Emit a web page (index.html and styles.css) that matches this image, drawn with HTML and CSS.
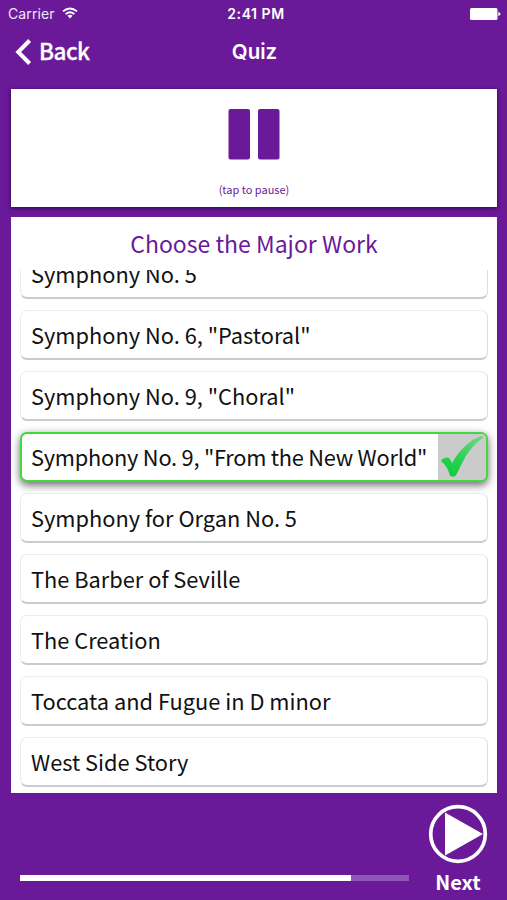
FILE: index.html
```html
<!DOCTYPE html>
<html lang="en">
<head>
<meta charset="utf-8">
<title>Quiz</title>
<link rel="stylesheet" href="styles.css">
</head>
<body>
<div class="app">
  <div class="status">
    <div class="carrier"><span>Carrier</span>
      <svg class="wifi" width="16" height="12" viewBox="0 0 16 12" fill="none" stroke="#fff" stroke-width="1.9"><path d="M1 4.4Q8-1.6 15 4.4M3.6 7.1Q8 3.3 12.4 7.1"/><path d="M5.5 8.8Q8 6.8 10.5 8.8L8 11.5Z" fill="#fff" stroke="none"/></svg>
    </div>
    <div class="time">2:41 PM</div>
    <svg class="battery" width="31" height="12" viewBox="0 0 31 12" fill="#fff"><rect width="27.5" height="12" rx="1.5"/><path d="M28.3 4Q30.5 4.4 30.5 6T28.3 8Z"/></svg>
  </div>
  <header class="nav">
    <div class="back">
      <svg width="17" height="26" viewBox="0 0 17 26" fill="none" stroke="#fff" stroke-width="4"><path d="M14.6 1.5L3.2 13L14.6 24.5"/></svg>
      <span class="label">Back</span>
    </div>
    <h1 class="title">Quiz</h1>
    <div></div>
  </header>
  <section class="player">
    <svg width="52" height="51" viewBox="0 0 52 51" fill="#6a1a98"><rect x="0.5" width="21.5" height="50.5" rx="2"/><rect x="30" width="21.5" height="50.5" rx="2"/></svg>
    <p class="hint">(tap to pause)</p>
  </section>
  <section class="question">
    <h2 class="prompt">Choose the Major Work</h2>
    <div class="viewport">
      <ul class="list">
        <li class="row">Symphony No. 5</li>
        <li class="row">Symphony No. 6, "Pastoral"</li>
        <li class="row">Symphony No. 9, "Choral"</li>
        <li class="row correct"><span>Symphony No. 9, "From the New World"</span>
          <span class="mark"><svg width="47" height="47" viewBox="0 0 47 47"><defs><linearGradient id="g" x1="0" y1="1" x2=".55" y2="0"><stop offset="0" stop-color="#0ccb3c"/><stop offset=".55" stop-color="#2bd253"/><stop offset="1" stop-color="#65d37c"/></linearGradient></defs><path fill="url(#g)" d="M3.2 26.2Q6.5 22.8 10 23.8Q12.2 24.2 14 29.3Q19 19.6 27.5 11.8Q35 4.3 44.8 2.1Q45.5 2.8 44.5 4Q34 11.9 27.5 22.6Q21.5 34.5 18 41.5Q13.7 44 11.8 41.2Q10.1 34 5.2 28.9Q3.8 28.8 3.2 26.2Z"/></svg></span>
        </li>
        <li class="row">Symphony for Organ No. 5</li>
        <li class="row">The Barber of Seville</li>
        <li class="row">The Creation</li>
        <li class="row">Toccata and Fugue in D minor</li>
        <li class="row">West Side Story</li>
      </ul>
    </div>
  </section>
  <footer class="footer">
    <div class="track"><div class="fill"></div></div>
    <div class="next">
      <svg width="60" height="60" viewBox="0 0 60 60"><circle cx="30" cy="30" r="27.3" fill="none" stroke="#fff" stroke-width="3.7"/><path d="M17 8.5V51.5L55 30Z" fill="#fff"/></svg>
      <span>Next</span>
    </div>
  </footer>
</div>
</body>
</html>
```

FILE: styles.css
```css
* { box-sizing: border-box; margin: 0; padding: 0; }
body {
  background: #6a1a98;
  font-family: "Noto Sans CJK SC", "Noto Sans", sans-serif;
  color: #111;
}
.app {
  width: 507px;
  height: 900px;
  display: flex;
  flex-direction: column;
  overflow: hidden;
  white-space: nowrap;
}
.status {
  height: 28px;
  display: grid;
  grid-template-columns: 1fr auto 1fr;
  align-items: center;
  padding: 0 6px 0 8px;
  color: #fff;
  font: 14px/28px Inter, sans-serif;
}
.carrier { display: flex; align-items: center; gap: 7px; color: #f2e6f8; letter-spacing: 0.1px; }
.wifi { margin-top: -2px; }
.time { font-weight: 600; font-size: 14px; letter-spacing: 0.55px; margin-left: 3px; }
.battery { justify-self: end; }
.nav {
  height: 61px;
  display: grid;
  grid-template-columns: 1fr auto 1fr;
  padding: 0 15px;
  color: #fff;
}
.back {
  display: flex;
  align-items: center;
  gap: 7px;
  height: 48px;
}
.label { font-size: 22.5px; line-height: 44px; font-weight: 500; height: 48px; letter-spacing: -0.5px; -webkit-text-stroke: 0.3px #fff; }
.title { height: 48px; font: 600 20.5px/48px Inter, sans-serif; padding-left: 2px; }
.player {
  height: 118px;
  margin: 0 10px 0 11px;
  padding-top: 20px;
  background: #fff;
  box-shadow: 0 1px 4px rgba(20, 0, 40, 0.8);
  display: flex;
  flex-direction: column;
  align-items: center;
}
.hint { margin-top: 20px; color: #6a1a98; font-size: 11px; line-height: 18px; }
.question {
  height: 576px;
  margin: 10px 10px 0 11px;
  background: #fff;
}
.prompt {
  height: 53px;
  color: #6a1a98;
  font-size: 23px;
  font-weight: 400;
  line-height: 53px;
  text-align: center;
}
.viewport { height: 523px; overflow: hidden; padding: 0 9px; }
.list {
  list-style: none;
  display: flex;
  flex-direction: column;
  gap: 11px;
  margin-top: -21px;
}
.row {
  height: 50px;
  flex: none;
  display: flex;
  justify-content: space-between;
  padding-left: 10px;
  border: 1px solid #ececec;
  border-right-color: #ddd;
  border-bottom: 2px solid #cbcbcb;
  border-radius: 7px;
  background: #fff;
  font-size: 21.8px;
  line-height: 47px;
}
.correct {
  border: 2px solid #43d743;
  padding-left: 9px;
  line-height: 45px;
  letter-spacing: -0.24px;
  overflow: hidden;
  box-shadow: 0 3px 9px rgba(0, 0, 0, 0.6);
}
.mark { width: 48px; background: #cbcbcb; }
.mark svg { display: block; }
.footer {
  flex: 1;
  display: flex;
  justify-content: space-between;
  padding: 0 19px 0 20px;
  color: #fff;
}
.track { width: 389px; height: 6px; margin-top: 82px; background: #8f57b3; }
.fill { width: 331px; height: 6px; background: #fff; }
.next {
  display: flex;
  flex-direction: column;
  align-items: center;
  padding-top: 11px;
  font-size: 20px;
  line-height: 36px;
  font-weight: 700;
}
```
